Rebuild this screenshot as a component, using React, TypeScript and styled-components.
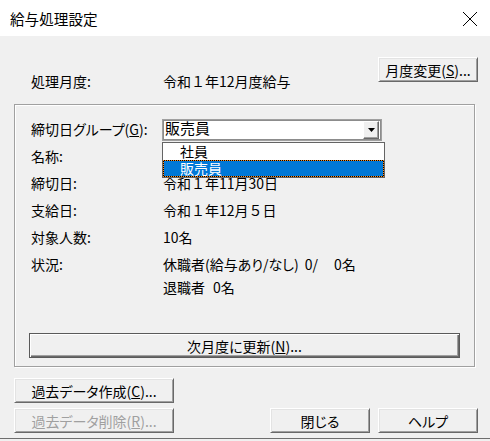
import React from 'react';
import styled, { createGlobalStyle } from 'styled-components';

const Global = createGlobalStyle`
  html, body { margin: 0; padding: 0; background: #f0f0f0; }
  body {
    font-family: "Noto Sans CJK JP", "Liberation Sans", sans-serif;
    font-size: 14px;
    font-feature-settings: "palt";
    color: #000;
  }
  * { box-sizing: border-box; }
`;

const Window = styled.div`
  width: 490px;
  height: 441px;
  display: flex;
  flex-direction: column;
  background: #f0f0f0;
  overflow: hidden;
`;

const TitleBar = styled.div`
  height: 36px;
  flex: none;
  background: #fff;
  display: flex;
  align-items: center;
  justify-content: space-between;
  padding: 0 12px 0 10px;
`;

const Title = styled.div`
  font-size: 14.6px;
  font-feature-settings: normal;
  line-height: 18px;
  margin-top: 2px;
`;

const CloseIcon = styled.svg`
  width: 16px;
  height: 16px;
  display: block;
  margin-top: 2px;
`;

const Body = styled.div`
  flex: 1;
  display: flex;
  flex-direction: column;
  padding: 0 12px 0 14px;
`;

const Header = styled.div`
  height: 68px;
  display: flex;
  align-items: flex-start;
`;

const HeaderLabel = styled.div`
  width: 149px;
  padding-left: 17px;
  margin-top: 37px;
  line-height: 16px;
`;

const HeaderValue = styled.div`
  flex: 1;
  margin-top: 37px;
  line-height: 16px;
  font-feature-settings: normal;
`;

const Button = styled.button<{ $w: number; $default?: boolean }>`
  width: ${p => p.$w}px;
  height: 25px;
  flex: none;
  padding: 0;
  margin: 0;
  font-family: inherit;
  font-size: 14px;
  font-feature-settings: "palt";
  line-height: 16px;
  color: #000;
  background: #f0f0f0;
  border: 1px solid;
  border-color: ${p => (p.$default ? '#5a5a5a' : '#fff #696969 #696969 #fff')};
  box-shadow: ${p =>
    p.$default
      ? 'inset 1px 1px 0 #fff, inset -1px -1px 0 #696969, inset -2px -2px 0 #a0a0a0'
      : 'inset 1px 1px 0 #e3e3e3, inset -1px -1px 0 #a0a0a0'};
  &:disabled { color: #a0a0a0; }
  u { text-decoration: underline; text-underline-offset: 1px; }
`;

const HeaderButton = styled(Button)`
  margin-top: 21px;
`;

const Group = styled.div`
  width: 461px;
  height: 263px;
  border: 1px solid #a0a0a0;
  box-shadow: 1px 1px 0 #fff, inset 1px 1px 0 #fff;
  display: flex;
  flex-direction: column;
  padding: 11px 13px 8px 15px;
`;

const Row = styled.div<{ $h?: number }>`
  display: flex;
  align-items: ${p => (p.$h ? 'center' : 'flex-start')};
  height: ${p => p.$h ?? 27}px;
  padding-left: 1px;
`;

const Label = styled.div<{ $w?: number }>`
  width: ${p => p.$w ?? 132}px;
  flex: none;
  line-height: 27px;
`;

const Value = styled.div`
  line-height: 27px;
  white-space: pre;
  font-feature-settings: normal;
`;

const ValueStack = styled.div`
  display: flex;
  flex-direction: column;
  white-space: pre;
`;

const SubLine = styled.div<{ $h: number }>`
  line-height: ${p => p.$h}px;
`;

const Count = styled.span<{ $ml: number }>`
  margin-left: ${p => p.$ml}px;
`;

const Combo = styled.div`
  position: relative;
  width: 220px;
  height: 22px;
  background: #fff;
  border: 1px solid #a0a0a0;
  box-shadow: inset 0 0 0 1px #8c8c8c;
  display: flex;
  align-items: center;
  padding: 2px;
`;

const ComboText = styled.div`
  flex: 1;
  font-size: 15px;
  font-feature-settings: normal;
  line-height: 16px;
  margin-top: -3px;
`;

const ComboArrow = styled.div`
  width: 16px;
  height: 18px;
  background: #f0f0f0;
  border: 1px solid;
  border-color: #fff #696969 #696969 #fff;
  box-shadow: inset -1px -1px 0 #a0a0a0;
  display: flex;
  align-items: center;
  justify-content: center;
`;

const DropList = styled.div`
  position: absolute;
  top: 22px;
  left: -1px;
  width: 223px;
  background: #fff;
  border: 1px solid #646464;
  z-index: 2;
`;

const DropItem = styled.div<{ $sel?: boolean }>`
  height: 17px;
  padding-left: 17px;
  font-size: 14px;
  font-feature-settings: normal;
  line-height: 17px;
  color: ${p => (p.$sel ? '#fff' : '#000')};
  background: ${p => (p.$sel ? '#0078d7' : '#fff')};
  box-shadow: ${p => (p.$sel ? 'inset 0 0 0 1px #000' : 'none')};
  outline: ${p => (p.$sel ? '1px dotted #ff8c1a' : 'none')};
  outline-offset: -1px;
`;

const UpdateButton = styled(Button)`
  margin-top: auto;
  margin-left: -1px;
`;

const BottomRow = styled.div<{ $mt: number }>`
  display: flex;
  justify-content: space-between;
  margin-top: ${p => p.$mt}px;
`;

const RightButtons = styled.div`
  display: flex;
  gap: 8px;
`;

const Edge = styled.div`
  margin-top: auto;
  margin-left: -14px;
  margin-right: -12px;
  height: 1px;
  background: #6e6e6e;
  margin-bottom: 2px;
`;

export default function App() {
  return (
    <Window>
      <Global />
      <TitleBar>
        <Title>給与処理設定</Title>
        <CloseIcon viewBox="0 0 16 16">
          <path d="M1 1 L15 15 M15 1 L1 15" stroke="#000" strokeWidth="1" fill="none" />
        </CloseIcon>
      </TitleBar>
      <Body>
        <Header>
          <HeaderLabel>処理月度:</HeaderLabel>
          <HeaderValue>令和１年12月度給与</HeaderValue>
          <HeaderButton $w={100}>
            月度変更(<u>S</u>)...
          </HeaderButton>
        </Header>
        <Group>
          <Row $h={27}>
            <Label $w={131}>
              締切日グループ(<u>G</u>):
            </Label>
            <Combo>
              <ComboText>販売員</ComboText>
              <ComboArrow>
                <svg width="7" height="4" viewBox="0 0 7 4">
                  <polygon points="0,0 7,0 3.5,4" fill="#000" />
                </svg>
              </ComboArrow>
              <DropList>
                <DropItem>社員</DropItem>
                <DropItem $sel>販売員</DropItem>
              </DropList>
            </Combo>
          </Row>
          <Row>
            <Label>名称:</Label>
          </Row>
          <Row>
            <Label>締切日:</Label>
            <Value>令和１年11月30日</Value>
          </Row>
          <Row>
            <Label>支給日:</Label>
            <Value>令和１年12月５日</Value>
          </Row>
          <Row>
            <Label>対象人数:</Label>
            <Value>10名</Value>
          </Row>
          <Row>
            <Label>状況:</Label>
            <ValueStack>
              <SubLine $h={27}>
                休職者(給与あり/なし)<Count $ml={6}>0/</Count>
                <Count $ml={16}>0名</Count>
              </SubLine>
              <SubLine $h={18}>
                退職者<Count $ml={8}>0名</Count>
              </SubLine>
            </ValueStack>
          </Row>
          <UpdateButton $w={431} $default>
            次月度に更新(<u>N</u>)...
          </UpdateButton>
        </Group>
        <BottomRow $mt={11}>
          <Button $w={160}>
            過去データ作成(<u>C</u>)...
          </Button>
        </BottomRow>
        <BottomRow $mt={5}>
          <Button $w={160} disabled>
            過去データ削除(<u>R</u>)...
          </Button>
          <RightButtons>
            <Button $w={100}>閉じる</Button>
            <Button $w={100}>ヘルプ</Button>
          </RightButtons>
        </BottomRow>
        <Edge />
      </Body>
    </Window>
  );
}
